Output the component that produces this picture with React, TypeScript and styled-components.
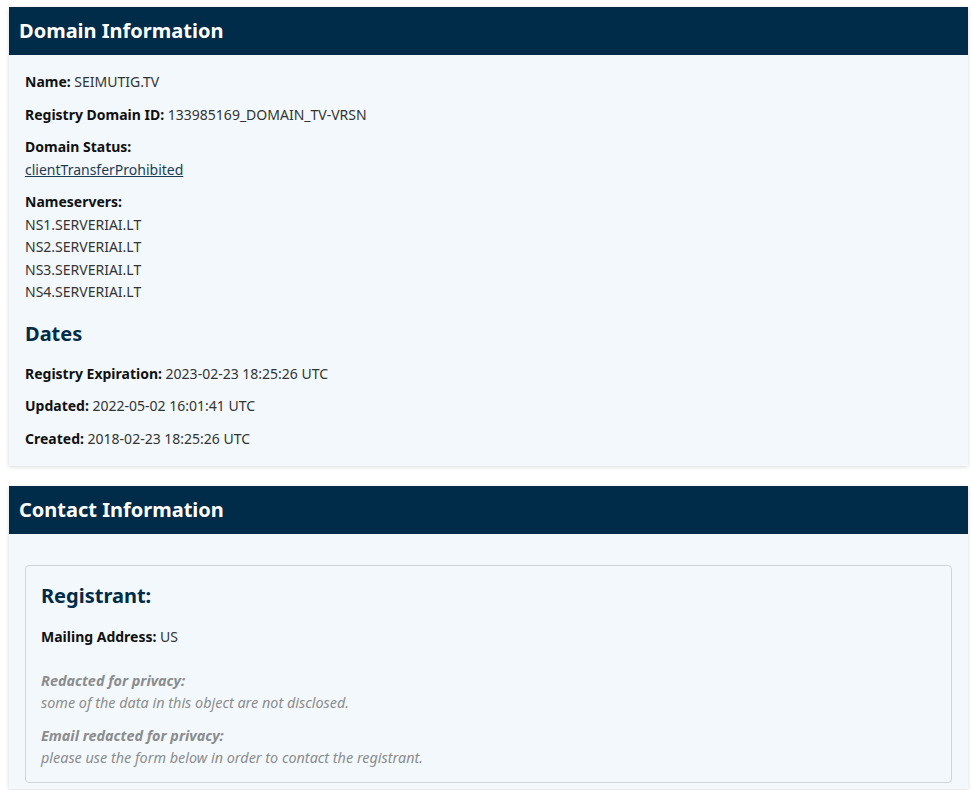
import React from "react"
import styled, { createGlobalStyle } from "styled-components"

const GlobalStyle = createGlobalStyle`
    body {
        margin: 0;
        padding: 7px 4px 0 9px;
        background: #ffffff;
        font-family: "Noto Sans", "Open Sans", sans-serif;
        font-size: 14px;
        line-height: 22.5px;
        color: #222;
    }
`

const Card = styled.section`
    background: #f2f8fc;
    box-shadow: 0 1px 4px rgba(0, 0, 0, 0.15);
    margin-bottom: 20px;
`

const CardHeader = styled.h2`
    margin: 0;
    background: #002b49;
    color: #ffffff;
    font-size: 20px;
    font-weight: 700;
    height: 48px;
    line-height: 48px;
    padding: 0 10px;
`

const CardBody = styled.div`
    padding: 16px 16px 6px;
`

const Field = styled.p<{ $gap?: number }>`
    margin: 0 0 ${(p) => p.$gap ?? 10}px;
`

const Label = styled.strong`
    font-weight: 700;
    color: #111;
`

const Value = styled.span`
    color: #333;
`

const Link = styled.a`
    color: #1d3c55;
    text-decoration: underline;
`

const SubHeading = styled.h3<{ $top: number; $bottom: number }>`
    margin: ${(p) => p.$top}px 0 ${(p) => p.$bottom}px;
    font-size: 20px;
    font-weight: 700;
    color: #002b49;
    line-height: 28px;
`

const ContactBox = styled.div`
    border: 1px solid #cfd4d8;
    border-radius: 4px;
    padding: 16px 15px 2px;
    margin: 15px 0 0;
`

const Note = styled.p`
    margin: 0 0 10px;
    color: #8c8c8c;
    font-style: italic;
    font-size: 14.4px;
    line-height: 22.5px;
    strong {
        font-weight: 700;
    }
`

const nameservers = ["NS1.SERVERIAI.LT", "NS2.SERVERIAI.LT", "NS3.SERVERIAI.LT", "NS4.SERVERIAI.LT"]

function App() {
    return (
        <>
            <GlobalStyle />
            <Card>
                <CardHeader>Domain Information</CardHeader>
                <CardBody>
                    <Field><Label>Name:</Label> <Value>SEIMUTIG.TV</Value></Field>
                    <Field><Label>Registry Domain ID:</Label> <Value>133985169_DOMAIN_TV-VRSN</Value></Field>
                    <Field>
                        <Label>Domain Status:</Label><br />
                        <Link href="#">clientTransferProhibited</Link>
                    </Field>
                    <Field>
                        <Label>Nameservers:</Label>
                        {nameservers.map((ns) => (
                            <React.Fragment key={ns}><br /><Value>{ns}</Value></React.Fragment>
                        ))}
                    </Field>
                    <SubHeading $top={16} $bottom={15}>Dates</SubHeading>
                    <Field><Label>Registry Expiration:</Label> <Value>2023-02-23 18:25:26 UTC</Value></Field>
                    <Field><Label>Updated:</Label> <Value>2022-05-02 16:01:41 UTC</Value></Field>
                    <Field><Label>Created:</Label> <Value>2018-02-23 18:25:26 UTC</Value></Field>
                </CardBody>
            </Card>
            <Card>
                <CardHeader>Contact Information</CardHeader>
                <CardBody>
                    <ContactBox>
                        <SubHeading $top={0} $bottom={16}>Registrant:</SubHeading>
                        <Field $gap={21}><Label>Mailing Address:</Label> <Value>US</Value></Field>
                        <Note>
                            <strong>Redacted for privacy:</strong><br />
                            some of the data in this object are not disclosed.
                        </Note>
                        <Note>
                            <strong>Email redacted for privacy:</strong><br />
                            please use the form below in order to contact the registrant.
                        </Note>
                    </ContactBox>
                </CardBody>
            </Card>
        </>
    )
}

export default App
